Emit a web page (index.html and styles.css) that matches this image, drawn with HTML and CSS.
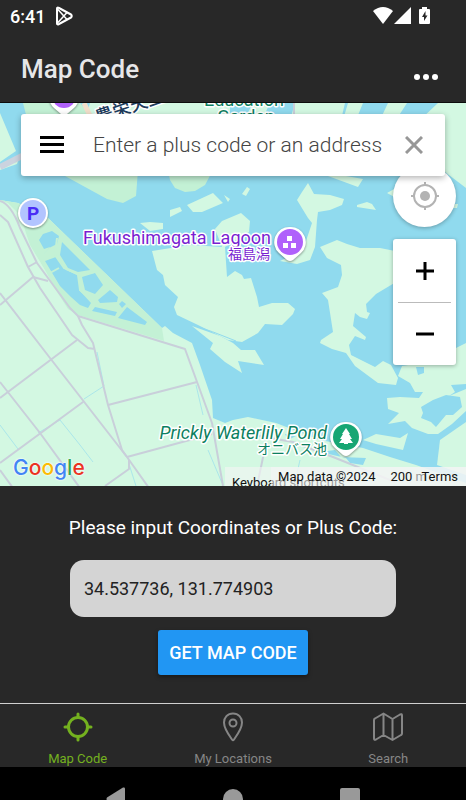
FILE: index.html
```html
<!DOCTYPE html>
<html lang="en">
<head>
    <meta charset="UTF-8">
    <meta name="viewport" content="width=device-width, initial-scale=1.0">
    <title>Map Code</title>
    <link rel="stylesheet" href="styles.css">
</head>
<body>

<div class="status-bar">
    <span>6:41</span>
    <svg class="status-play" width="20" height="20" viewBox="0 0 20 20" fill="none" stroke="#fff" stroke-width="2" stroke-linejoin="round">
        <path d="M3 2.5Q3 1 5 2L17 8.500Q18.500 10 17 11.500L5 18Q3 19 3 17.500Z"/>
        <path d="M3.500 3L13 13.500M3.500 17L13 6.500" stroke-width="1.500"/>
    </svg>
    <svg class="status-icons" width="60" height="20" viewBox="0 0 60 20" fill="#fff">
        <path d="M0 5Q10-3 20 5L10 18Z"/>
        <path d="M38 1V18H21Z"/>
        <path d="M49 1h5v2h2q1 0 1 1v13q0 1-1 1h-9q-1 0-1-1V4q0-1 1-1h2z"/>
        <path d="M52.500 5v4.500h2L51 15v-4h-2z" fill="#282828"/>
    </svg>
</div>

<header class="header">
    <h1>Map Code</h1>
    <button class="more" aria-label="More"><span></span><span></span><span></span></button>
</header>

<main>
    <section class="map">
        <svg class="map-canvas" viewBox="0 103 466 383" preserveAspectRatio="xMidYMid slice">
            <!-- land -->
            <g fill="#d3f8e2">
                <path d="M0 113L16 151L0 162ZM0 166L20 155L17 164L0 170Z"/>
                <path d="M90 103H230V120H85Z"/>
                <path d="M253 103H270L262 120H244ZM295 103H345L341 120H290ZM348 103H363L356 120H343ZM388 103H407L396 120H380Z"/>
                <path d="M438 103H466V188L445 172L420 120Z"/>
                <path d="M328 176H346L363 179L358 187Z"/>
                <path d="M152 251L190 245L222 247L215 229L222 221L241 213L250 221L249 232L225 247L227 277L235 271L242 275L244 279L251 278L257 297L259 307L272 303L288 303L295 309L293 314L282 325L265 324L258 333L242 342L228 340L198 325L177 315L174 307L178 297L165 285L163 275L157 270Z"/>
                <path d="M192 326L220 336L233 343L241 350L255 350L264 365L238 361L242 373L225 362L210 349L213 343Z"/>
                <path d="M308 183L314 194L330 195L344 199L342 205L330 210L318 212L317 220L315 247L310 260L297 264L280 261L303 250L312 223L308 218L297 200L302 192Z"/>
                <path d="M357 205L367 202L372 204L376 210L357 207Z"/>
                <path d="M187 205L213 193L223 203L202 212L193 212ZM170 210L180 207L182 211L170 217ZM224 195L230 199L228 202ZM247 187L250 189L246 196L242 194ZM140 223L150 222L163 223L163 229L150 231Z"/>
                <path d="M320 247L337 240L347 244L360 248L380 248L400 252L396 282L376 294L366 304L367 312L370 313L367 319L360 317L355 313L353 326L366 337L365 340L355 336L349 345L351 355L365 362L375 367L383 361L391 365L398 378L396 385L378 383L355 366L346 353L332 349L320 343L321 340L333 332L328 300L322 293L338 287L342 275L341 265L327 258Z"/>
                <path d="M387 193L396 188L400 200ZM455 204L458 204L457 208L453 208Z"/>
                <path d="M398 376L402 366L440 360L456 348L466 343V411L452 424L438 434L428 434L412 428L405 421L388 424L399 413L388 409L387 398L400 397L419 398L423 392L415 392L410 383Z"/>
                <path d="M466 422L440 440L437 465L466 475Z"/>
                <path d="M363 440L376 434L400 438L408 433L403 450L376 444Z"/>
                <path d="M0 200L18 203L48 218L162 328L165 326L173 333L192 343L200 365L212 400L213 418L225 423L233 420L248 417L276 423L320 440L363 448L390 457L416 465L466 483V486H0Z"/>
            </g>

            <!-- parks -->
            <g fill="#c3f1d5">
                <path d="M23 103L30 130L65 176L107 199L123 203L136 196L138 170L80 103Z"/>
                <path d="M168 170L170 180L175 188L185 192L195 191L205 185L213 170Z"/>
                <path d="M0 200L18 203L48 218L162 328L164 341L78 315L68 309L56 290L45 270L30 245L20 215L8 203Z"/>
            </g>

            <!-- ponds -->
            <g fill="#90daee">
                <path d="M421 407L433 400L446 395L460 397L462 407L453 415L446 415L436 427L431 422L421 418L423 413Z"/>
                <path d="M416 367H424V373L418 375ZM466 384L451 385L455 392L449 396L466 389Z"/>
                <path d="M39 240L43 234L52 231L59 236L57 244L49 248L43 255L50 247L44 249Z"/>
                <path d="M62 242L90 270L78 272L68 268L60 255ZM82 277L95 273L103 285L95 294L85 290Z"/>
                <path d="M45 261L56 257L66 270L77 275L79 290L91 303L88 308L80 305L71 297L60 286Z"/>
                <path d="M110 290L118 297L117 302L100 303L98 300ZM95 307L117 312L115 316L92 311Z"/>
                <path d="M127 307L147 322L145 325L118 318ZM122 301L126 304L122 308L119 304Z"/>
                <path d="M285 434L296 436L288 440ZM320 452L335 450L341 457L366 458L363 465L350 463L346 458Z"/>
            </g>
            <g fill="none" stroke="#c3f1d5" stroke-width="2">
                <path d="M57 238L55 255L64 268L80 275V290L97 305M50 273L59 268M81 275L94 272"/>
            </g>
            <g fill="none" stroke="#90daee">
                <path d="M190 324Q212 331 236 341"/>
                <path d="M97 352L104 386L84 399M38 433L60 420L80 445L93 462M0 425L18 449M196 385L203 415M208 450L222 483M129 464L136 486M300 460L294 486" stroke-width="1" opacity=".6"/>
            </g>

            <!-- roads -->
            <g class="roads">
                <path d="M0 201Q11 204 20 228L37 263L70 308L78 316L185 349L212 423L223 486"/>
                <path d="M0 215L8 222L28 267L40 288L72 335L88 348L95 349M78 316L82 325L93 343L108 405L122 450L127 457"/>
                <path d="M0 293L50 358L127 457L149 488M0 398L77 340M108 405L197 382M0 382L40 433L80 488M0 463L83 402"/>
                <path d="M127 457L212 434M129 460V469L105 486M0 305L33 277L48 281M28 267L37 262M0 470L13 488"/>
                <path d="M265 448L257 486M225 430L293 442L333 457L395 482"/>
            </g>
            <path d="M0 167L24 155" stroke="#cbd3df" stroke-width="6"/>
            <path d="M294 103V120" stroke="#c9ced9" stroke-width="2"/>
            <path d="M84 103L92 120" stroke="#f2dfcb" stroke-width="5"/>
            <path d="M92 115L130 103" stroke="#f4f6f8" stroke-width="2"/>

            <!-- markers -->
            <g class="pin">
                <path d="M49 97A15 15 0 0 0 54 108L61 114Q64 116 67 114L74 108A15 15 0 0 0 79 97Z" fill="#fff"/>
                <circle cx="64" cy="96" r="12" fill="#b061fb"/>
            </g>
            <g class="pin">
                <circle cx="33" cy="213" r="15" fill="#fff"/>
                <circle cx="33" cy="213" r="13" fill="#b2c4ff"/>
            </g>
            <text class="parking" x="33" y="220">P</text>
            <g class="pin">
                <path d="M290 227A15 15 0 0 0 279 253L287 260Q290 262 293 260L301 253A15 15 0 0 0 290 227Z" fill="#fff"/>
                <circle cx="290" cy="242" r="13" fill="#b061fb"/>
                <path d="M287 236h5v5h-5zM283 243h5v5h-5zM291 243h5v5h-5z" fill="#fff"/>
            </g>
            <g class="pin">
                <path d="M346 422A15 15 0 0 0 335 448L343 455Q346 457 349 455L357 448A15 15 0 0 0 346 422Z" fill="#fff"/>
                <circle cx="346" cy="437" r="13" fill="#17a673"/>
                <path d="M346 428L350 434H349L352 439H350L353 443H348V444H344V443H339L342 439H340L343 434H342Z" fill="#fff"/>
            </g>

            <!-- place names -->
            <text class="label navy" x="98" y="124" transform="rotate(-19 98 124)">豊栄天王</text>
            <text class="label green" x="244" y="106" text-anchor="middle">Education</text>
            <text class="label green" x="246" y="123" text-anchor="middle">Garden</text>
            <text class="label purple" x="271" y="244" text-anchor="end">Fukushimagata Lagoon</text>
            <text class="label purple cjk" x="270" y="259" text-anchor="end">福島潟</text>
            <text class="label green italic" x="327" y="439" text-anchor="end">Prickly Waterlily Pond</text>
            <text class="label green cjk" x="327" y="454" text-anchor="end">オニバス池</text>
        </svg>

        <button class="locate" aria-label="My position">
            <svg width="30" height="30" viewBox="0 0 30 30" fill="none" stroke="#b3b3b3" stroke-width="2">
                <circle cx="15" cy="15" r="11"/>
                <circle cx="15" cy="15" r="5" fill="#b3b3b3" stroke="none"/>
                <path d="M15 1v4M15 25v4M1 15h4M25 15h4"/>
            </svg>
        </button>

        <form class="search">
            <button type="button" aria-label="Menu">
                <svg width="24" height="18" viewBox="0 0 24 18" stroke="#000" stroke-width="3">
                    <path d="M0 1.500H24M0 8.500H24M0 15.500H24"/>
                </svg>
            </button>
            <input type="text" placeholder="Enter a plus code or an address" aria-label="Enter a plus code or an address">
            <button type="button" aria-label="Clear">
                <svg width="18" height="18" viewBox="0 0 18 18" stroke="#979797" stroke-width="3">
                    <path d="M1 1L17 17M17 1L1 17"/>
                </svg>
            </button>
        </form>

        <div class="zoom">
            <button aria-label="Zoom in">
                <svg width="18" height="18" viewBox="0 0 18 18" stroke="#000" stroke-width="3"><path d="M0 9H18M9 0V18"/></svg>
            </button>
            <button aria-label="Zoom out">
                <svg width="18" height="18" viewBox="0 0 18 18" stroke="#000" stroke-width="3"><path d="M0 9H18"/></svg>
            </button>
        </div>

        <a class="google" href="#"><span class="g-blue">G</span><span class="g-red">o</span><span class="g-yellow">o</span><span class="g-blue">g</span><span class="g-green">l</span><span class="g-red">e</span></a>

        <div class="attribution">
            <button class="shortcuts">Keyboard shortcuts</button>
            <div class="attribution-row">
                <span>Map data ©2024</span>
                <span class="scale">200 <i>m</i></span>
                <a href="#">Terms</a>
            </div>
        </div>
    </section>

    <form class="panel">
        <label for="coords">Please input Coordinates or Plus Code:</label>
        <input type="text" id="coords" value="34.537736, 131.774903">
        <button type="button">GET MAP CODE</button>
    </form>
</main>

<nav class="tabs">
    <a class="active" href="#">
        <svg width="30" height="30" viewBox="0 0 30 30" fill="none" stroke="currentColor" stroke-width="3" stroke-linecap="round">
            <circle cx="15" cy="15" r="9.500"/>
            <path d="M15 2v3M15 25v3M2 15h3M25 15h3"/>
        </svg>
        Map Code
    </a>
    <a href="#">
        <svg width="30" height="30" viewBox="0 0 30 30" fill="none" stroke="currentColor" stroke-width="2" stroke-linejoin="round">
            <path d="M15 1.500C9.500 1.500 6 5.500 6 10.500C6 17 13 26 14 27.500Q15 29 16 27.500C17 26 24 17 24 10.500C24 5.500 20.500 1.500 15 1.500Z"/>
            <circle cx="15" cy="11" r="3.500"/>
        </svg>
        My Locations
    </a>
    <a href="#">
        <svg width="30" height="30" viewBox="0 0 30 30" fill="none" stroke="currentColor" stroke-width="2" stroke-linejoin="round">
            <path d="M10.500 1.500L2 6.500Q1 7 1 8V26.500Q1 28.500 3 27.500L10.500 23L19.500 28L28 23Q29 22.500 29 21.500V3.500Q29 1.500 27 2.500L19.500 7ZM10.500 1.500V23M19.500 7V28"/>
        </svg>
        Search
    </a>
</nav>

<div class="system-nav">
    <svg width="20" height="24" viewBox="0 0 20 24"><path d="M19 1.500V23L1 13.500Q0 12 1 10.500L17 .500Q19 0 19 1.500Z"/></svg>
    <svg width="20" height="24" viewBox="0 0 20 24"><circle cx="10" cy="12" r="10"/></svg>
    <svg width="20" height="24" viewBox="0 0 20 24"><rect y="1" width="20" height="20" rx="2"/></svg>
</div>

</body>
</html>
```
FILE: styles.css
```css
* {
    box-sizing: border-box;
}

body {
    margin: 0;
    min-height: 100vh;
    display: flex;
    flex-direction: column;
    background-color: #282828;
    color: #fff;
    font-family: Roboto, "Noto Sans CJK JP", sans-serif;
}

button,
input {
    font-family: inherit;
    border: none;
    padding: 0;
}

button {
    background: none;
    cursor: pointer;
}

a {
    color: inherit;
    text-decoration: none;
}

svg {
    display: block;
}

.status-bar {
    display: flex;
    align-items: center;
    height: 32px;
    padding: 0 33px 0 10px;
    font-size: 18px;
    font-weight: 500;
}

.status-play {
    margin-left: 9px;
}

.status-icons {
    margin-left: auto;
}

.header {
    display: flex;
    justify-content: space-between;
    align-items: center;
    height: 71px;
    padding: 0 28px 0 21px;
    border-bottom: 1px solid #0c0c0c;
}

.header h1 {
    margin: 4px 0 0;
    color: #e6e6e8;
    font-size: 26px;
    font-weight: 500;
}

.more {
    display: flex;
    gap: 3px;
    padding-top: 20px;
}

.more span {
    width: 6px;
    height: 6px;
    border-radius: 50%;
    background-color: #fff;
}

main {
    flex: 1;
    display: flex;
    flex-direction: column;
}

.map {
    flex: 1;
    min-height: 320px;
    position: relative;
    overflow: hidden;
    background-color: #90daee;
}

.map-canvas {
    position: absolute;
    width: 100%;
    height: 100%;
}

.roads path {
    fill: none;
    stroke: #c9cfda;
    stroke-width: 2;
    stroke-linejoin: round;
}

.pin {
    filter: drop-shadow(0 1px 1px rgba(0, 0, 0, 0.4));
}

.label {
    font-size: 18px;
    paint-order: stroke;
    stroke: #fff;
    stroke-width: 3px;
    stroke-linejoin: round;
}

.label.cjk {
    font-size: 14px;
}

.label.italic {
    font-style: italic;
}

.label.purple {
    fill: #7a1fd1;
}

.label.green {
    fill: #0c8060;
}

.label.navy {
    fill: #1d3c5c;
    font-weight: 500;
}

.parking {
    fill: #4a2df5;
    font-size: 19px;
    font-weight: 700;
    text-anchor: middle;
}

/* controls over the map */
.search {
    position: absolute;
    top: 11px;
    left: 21px;
    right: 21px;
    height: 62px;
    display: flex;
    align-items: center;
    padding: 0 22px 0 19px;
    background-color: #fff;
    border-radius: 3px;
    box-shadow: 0 2px 6px rgba(0, 0, 0, 0.3);
}

.search input {
    flex: 1;
    min-width: 0;
    height: 40px;
    margin: 0 16px 0 29px;
    outline: none;
    background: none;
    color: #333;
    font-size: 21px;
    font-weight: 300;
}

.search input::placeholder {
    color: #444;
    opacity: 1;
}

.locate {
    position: absolute;
    top: 62px;
    right: 10px;
    width: 63px;
    height: 62px;
    display: flex;
    align-items: center;
    justify-content: center;
    border-radius: 50%;
    background-color: #fff;
    box-shadow: 0 1px 4px rgba(0, 0, 0, 0.3);
}

.zoom {
    position: absolute;
    top: 136px;
    right: 10px;
    width: 63px;
    padding: 0 5px;
    background-color: #fff;
    border-radius: 3px;
    box-shadow: 0 1px 4px rgba(0, 0, 0, 0.3);
}

.zoom button {
    width: 100%;
    height: 63px;
    display: flex;
    align-items: center;
    justify-content: center;
}

.zoom button + button {
    border-top: 1px solid #bbb;
}

.google {
    position: absolute;
    left: 13px;
    bottom: 4px;
    font-family: Inter, sans-serif;
    font-size: 21px;
    font-weight: 500;
    line-height: 28px;
    text-shadow: 0 0 2px #fff, 0 0 2px #fff;
}

.g-blue {
    color: #4285f4;
}

.g-red {
    color: #ea3323;
}

.g-yellow {
    color: #fbbc05;
}

.g-green {
    color: #34a853;
}

.attribution {
    position: absolute;
    right: 0;
    bottom: 0;
    width: 241px;
    height: 19px;
    overflow: hidden;
    background-color: rgba(245, 245, 245, 0.6);
    color: #111;
    font-size: 13px;
}

.shortcuts {
    position: absolute;
    top: 8px;
    left: 7px;
    font-size: 13px;
    color: #111;
}

.attribution-row {
    position: absolute;
    top: 0;
    right: 0;
    display: flex;
    gap: 15px;
    padding: 0 8px 0 7px;
    line-height: 20px;
    background-color: rgba(245, 245, 245, 0.6);
}

.scale {
    width: 16px;
    white-space: nowrap;
}

.scale i {
    color: #999;
    font-style: normal;
}

/* coordinates form */
.panel {
    display: flex;
    flex-direction: column;
    align-items: center;
    padding: 30px 0 28px;
}

.panel label {
    font-size: 19px;
    line-height: 24px;
}

.panel input {
    width: 70%;
    height: 57px;
    margin: 20px 0 13px;
    padding: 0 14px;
    border-radius: 14px;
    background-color: #d4d4d4;
    color: #222;
    font-size: 18px;
}

.panel button {
    height: 45px;
    padding: 0 11px;
    border-radius: 3px;
    background-color: #2196f3;
    color: #fff;
    font-size: 18px;
    font-weight: 500;
    box-shadow: 0 2px 4px rgba(0, 0, 0, 0.4);
}

.tabs {
    display: flex;
    border-top: 1px solid #d0d0d0;
}

.tabs a {
    flex: 1;
    display: flex;
    flex-direction: column;
    align-items: center;
    gap: 9px;
    padding-top: 8px;
    color: #868686;
    font-size: 13px;
    line-height: 16px;
}

.tabs a.active {
    color: #74b11f;
}

.system-nav {
    display: flex;
    justify-content: center;
    gap: 97px;
    height: 33px;
    padding-top: 20px;
    overflow: hidden;
    background-color: #000;
}

.system-nav svg {
    flex: none;
    fill: #999;
}
```
